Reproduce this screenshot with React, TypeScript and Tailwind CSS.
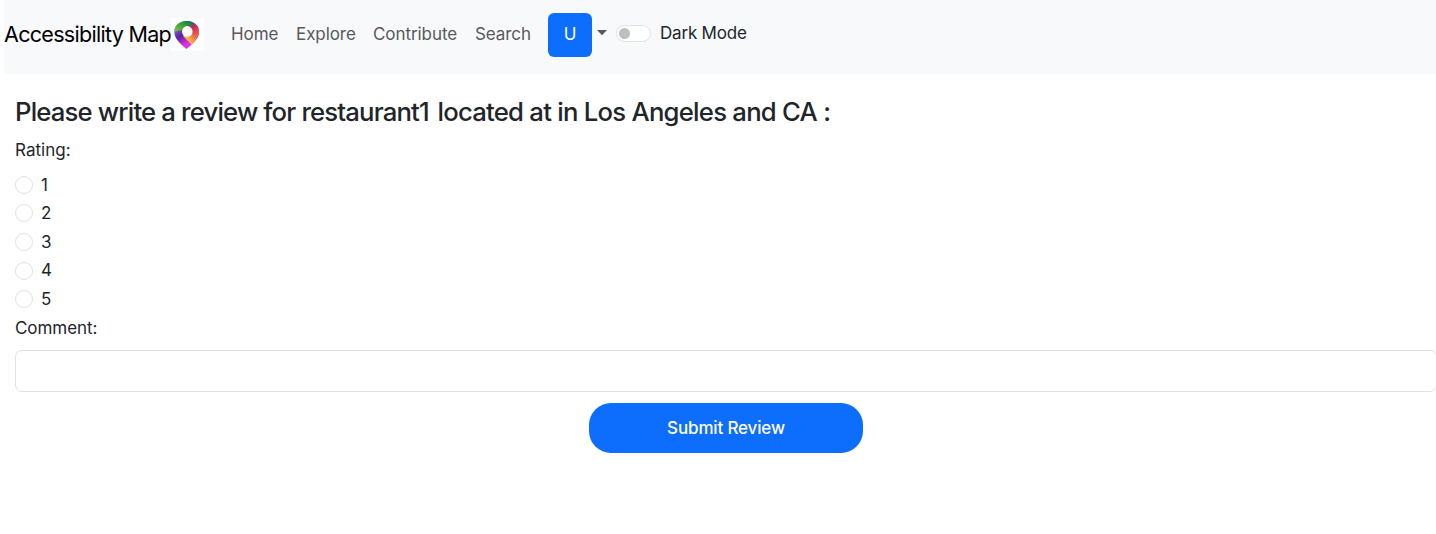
import React from "react";

function PinLogo() {
  return (
    <svg className="block h-[33px] w-[33px] shrink-0 bg-white" viewBox="0 0 33 33">
      <defs>
        <clipPath id="pin">
          <path d="M15.5 3C22.5 3 28 7 28 14C28 21.5 20 27 15.5 31C11 27 3.3 21.5 3.3 14C3.3 7 9 3 15.5 3Z" />
        </clipPath>
        <linearGradient id="green" x1="0" y1="1" x2="1" y2="0">
          <stop offset="0" stopColor="#c5d92f" />
          <stop offset="0.45" stopColor="#43ad35" />
          <stop offset="0.8" stopColor="#087e50" />
        </linearGradient>
        <linearGradient id="red" x1="0" y1="0" x2="0.6" y2="1">
          <stop offset="0" stopColor="#a8245b" />
          <stop offset="0.5" stopColor="#cf2458" />
          <stop offset="1" stopColor="#ed7545" />
        </linearGradient>
        <linearGradient id="orange" gradientUnits="userSpaceOnUse" x1="27" y1="15" x2="18" y2="24">
          <stop offset="0" stopColor="#d93f50" />
          <stop offset="1" stopColor="#ffc247" />
        </linearGradient>
        <linearGradient id="purple" gradientUnits="userSpaceOnUse" x1="5" y1="12" x2="15" y2="27">
          <stop offset="0" stopColor="#7a68c4" />
          <stop offset="0.4" stopColor="#5a20a6" />
          <stop offset="1" stopColor="#e332dc" />
        </linearGradient>
      </defs>
      <g clipPath="url(#pin)">
        <path fill="url(#purple)" d="M0 0H33V33H0Z" />
        <path fill="url(#orange)" d="M33 12L23 27L20.5 26.5L12 18L17 12Z" />
        <path fill="url(#red)" d="M19 3L33 0V15L25 19L20 14L17 7Z" />
        <path fill="url(#green)" d="M0 17L5 13L11 12L16 7L24 8Q21 4 17 0H0Z" />
      </g>
      <circle cx="16.3" cy="13.4" r="5.3" fill="#fff" />
    </svg>
  );
}

function Navbar() {
  return (
    <nav className="ml-1 flex h-[74px] items-start bg-[#f8f9fb]">
      <a className="mt-[18px] flex h-[33px] w-[200px] items-center text-[21.5px] tracking-[-0.7px] text-black">
        <span className="w-[167px] whitespace-nowrap">Accessibility Map</span>
        <PinLogo />
      </a>
      <div className="mt-[21px] ml-[27px] flex leading-[26px] tracking-[-0.07px] text-[#59595b]">
        <a className="w-[65px]">Home</a>
        <a className="w-[77px]">Explore</a>
        <a className="w-[102px]">Contribute</a>
        <a className="w-[73px]">Search</a>
      </div>
      <button className="mt-[13px] h-11 w-11 rounded-md bg-[#0d6efd] text-white">U</button>
      <svg className="mt-[30px] ml-[5px] block h-[6px] w-[10px]" viewBox="0 0 10 6">
        <path d="M0 0H10L5 5.2Z" fill="#59595b" />
      </svg>
      <label className="ml-[9px] mt-5 flex items-center leading-[26px]">
        <span className="mr-[9px] flex h-[17px] w-[35px] items-center rounded-full border border-[#dee2e6] bg-white pl-[2px]">
          <span className="h-[11px] w-[11px] rounded-full bg-[#bfbfbf]" />
        </span>
        Dark Mode
      </label>
    </nav>
  );
}

export default function App() {
  return (
    <div className="h-[534px] overflow-hidden bg-white font-['Inter',sans-serif] text-[17px] tracking-[-0.2px] text-[#212529]">
      <Navbar />
      <main className="flex flex-col pt-[22px] pl-[15px]">
        <h1 className="h-8 text-[25.7px] leading-8 font-medium tracking-[-0.755px] whitespace-nowrap">
          <span className="mr-[2.5px] tracking-[-0.83px]">Please write a review for restaurant1</span> located at in Los
          Angeles and CA :
        </h1>
        <div className="mt-[9px] h-[26px] leading-[26px] tracking-[0.02px]">Rating:</div>
        <div className="mt-[7.5px] flex flex-col">
          {[1, 2, 3, 4, 5].map((n) => (
            <label key={n} className="flex h-[28.6px] items-center">
              <span className="mr-2 h-[18px] w-[18px] rounded-full border border-[#dee2e6] bg-white" />
              <span className="pt-px">{n}</span>
            </label>
          ))}
        </div>
        <div className="mt-[1.5px] h-[26px] leading-[26px] tracking-[-0.05px]">Comment:</div>
        <input className="mt-[9px] h-[42px] w-[1422px] rounded-[7px] border border-[#dee2e6] bg-white px-3 outline-none" />
        <button className="mt-[11px] ml-[574px] h-[50px] w-[274px] rounded-[22px] bg-[#0d6efd] pt-px font-medium tracking-[-0.15px] text-white">
          Submit Review
        </button>
      </main>
    </div>
  );
}
